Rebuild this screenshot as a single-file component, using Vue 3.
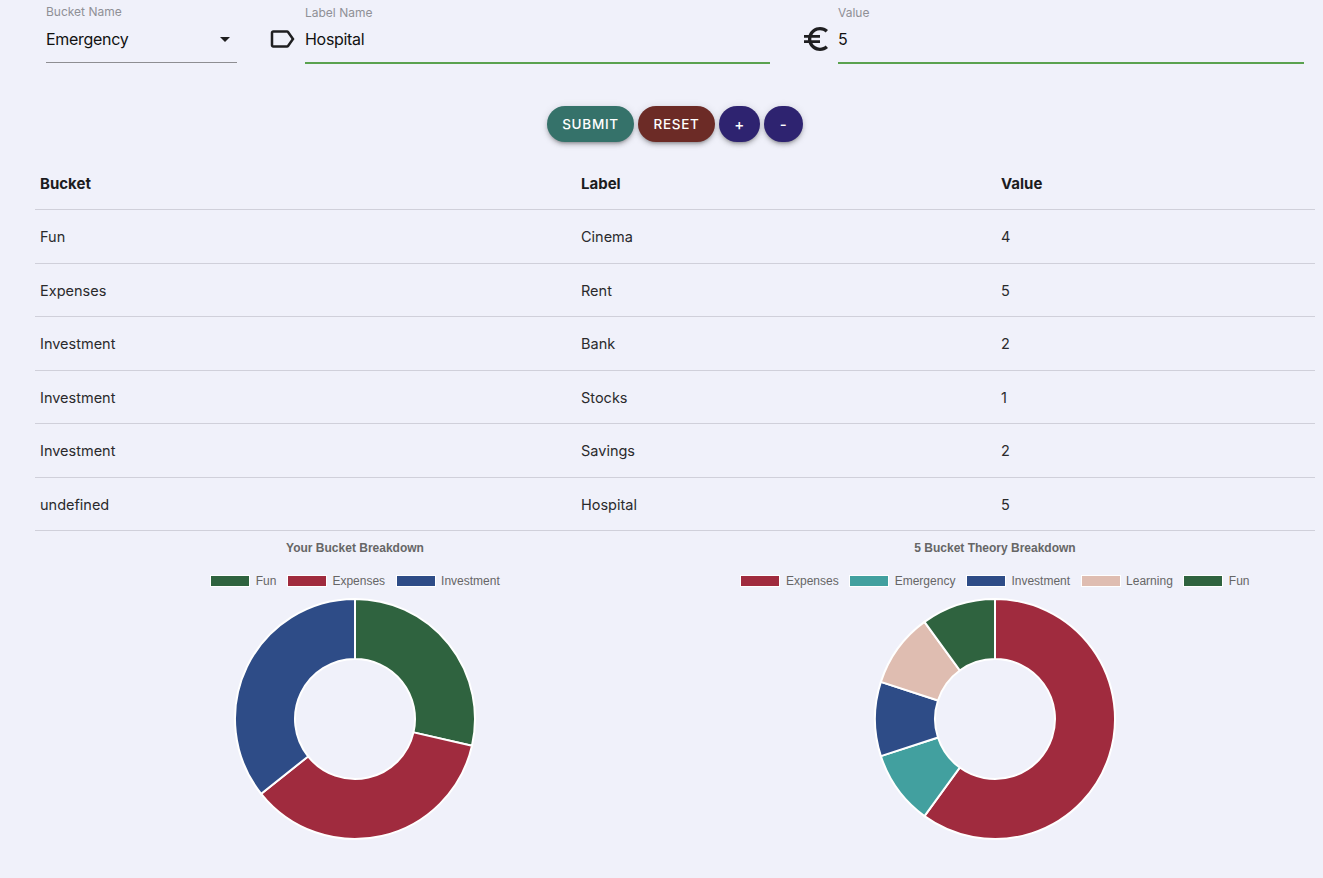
<template>
  <div class="page">
    <!-- form row -->
    <div class="form-row">
      <div class="field select-field">
        <label class="field-label">Bucket Name</label>
        <div class="select-value">
          <span>Emergency</span>
          <svg width="24" height="24" viewBox="0 0 24 24"><path d="M7 10l5 5 5-5z" fill="#1f1f1f" /></svg>
        </div>
      </div>
      <svg class="adorn label-icon" width="30" height="30" viewBox="0 0 24 24">
        <path d="M17.63 5.84C17.27 5.33 16.67 5 16 5L5 5.01C3.9 5.01 3 5.9 3 7v10c0 1.1.9 1.99 2 1.99L16 19c.67 0 1.27-.33 1.63-.84L22 12l-4.37-6.16zM16 17H5V7h11l3.55 5L16 17z" />
      </svg>
      <div class="field input-field label-field">
        <label class="field-label">Label Name</label>
        <div class="input-value">Hospital</div>
      </div>
      <svg class="adorn euro-icon" width="32" height="32" viewBox="0 0 24 24">
        <path d="M15 18.5c-2.51 0-4.68-1.42-5.76-3.5H15v-2H8.58c-.05-.33-.08-.66-.08-1s.03-.67.08-1H15V9H9.24C10.32 6.92 12.5 5.5 15 5.5c1.61 0 3.09.59 4.23 1.57L21 5.3C19.41 3.87 17.3 3 15 3c-3.92 0-7.24 2.51-8.48 6H3v2h3.06c-.04.33-.06.66-.06 1s.02.67.06 1H3v2h3.52c1.24 3.49 4.56 6 8.48 6 2.31 0 4.41-.87 6-2.3l-1.78-1.77c-1.13.98-2.6 1.57-4.22 1.57z" />
      </svg>
      <div class="field input-field">
        <label class="field-label">Value</label>
        <div class="input-value">5</div>
      </div>
    </div>

    <!-- buttons -->
    <div class="actions">
      <button class="btn submit">Submit</button>
      <button class="btn reset">Reset</button>
      <button class="btn small plus">+</button>
      <button class="btn small minus">-</button>
    </div>

    <!-- table -->
    <div class="table">
      <div class="row head">
        <div>Bucket</div>
        <div>Label</div>
        <div>Value</div>
      </div>
      <div v-for="(r, i) in rows" :key="i" class="row">
        <div>{{ r[0] }}</div>
        <div>{{ r[1] }}</div>
        <div>{{ r[2] }}</div>
      </div>
    </div>

    <!-- charts -->
    <div class="charts">
      <div v-for="c in charts" :key="c.title" class="chart">
        <div class="chart-title">{{ c.title }}</div>
        <div class="legend">
          <div v-for="s in c.slices" :key="s.name" class="legend-item">
            <span class="swatch" :style="{ background: s.color }"></span>
            <span>{{ s.name }}</span>
          </div>
        </div>
        <svg width="244" height="244" viewBox="-122 -122 244 244">
          <path v-for="s in c.slices" :key="s.name" :d="s.d" :fill="s.color" stroke="#fff" stroke-width="2" />
        </svg>
      </div>
    </div>
  </div>
</template>

<script setup>
const green = '#2f633f'
const red = '#a02b3e'
const blue = '#2e4c87'
const teal = '#42a09f'
const tan = '#dfbdb1'

const rows = [
  ['Fun', 'Cinema', 4],
  ['Expenses', 'Rent', 5],
  ['Investment', 'Bank', 2],
  ['Investment', 'Stocks', 1],
  ['Investment', 'Savings', 2],
  ['undefined', 'Hospital', 5],
]

// builds donut segments clockwise from 12 o'clock
function donut(items, outer = 120, inner = 60) {
  const total = items.reduce((sum, it) => sum + it.value, 0)
  let angle = -Math.PI / 2
  return items.map((it) => {
    const next = angle + (it.value / total) * Math.PI * 2
    const pt = (r, a) => `${(r * Math.cos(a)).toFixed(2)} ${(r * Math.sin(a)).toFixed(2)}`
    const large = next - angle > Math.PI ? 1 : 0
    const d = `M${pt(outer, angle)} A${outer} ${outer} 0 ${large} 1 ${pt(outer, next)} L${pt(inner, next)} A${inner} ${inner} 0 ${large} 0 ${pt(inner, angle)} Z`
    angle = next
    return { ...it, d }
  })
}

const charts = [
  {
    title: 'Your Bucket Breakdown',
    slices: donut([
      { name: 'Fun', value: 4, color: green },
      { name: 'Expenses', value: 5, color: red },
      { name: 'Investment', value: 5, color: blue },
    ]),
  },
  {
    title: '5 Bucket Theory Breakdown',
    slices: donut([
      { name: 'Expenses', value: 60, color: red },
      { name: 'Emergency', value: 10, color: teal },
      { name: 'Investment', value: 10, color: blue },
      { name: 'Learning', value: 10, color: tan },
      { name: 'Fun', value: 10, color: green },
    ]),
  },
]
</script>

<style>
html, body {
  margin: 0;
  background: #f0f1fa;
}
</style>

<style scoped>
.page {
  height: 878px;
  overflow: hidden;
  background: #f0f1fa;
  font-family: Inter, "Liberation Sans", sans-serif;
  color: #1c1c1e;
}

.form-row {
  display: flex;
  align-items: flex-start;
  padding: 0 19px 0 46px;
}

.field-label {
  display: block;
  font-size: 12px;
  line-height: 14px;
  color: #8f9096;
}

.select-field {
  width: 191px;
  margin-top: 5px;
  margin-right: 30px;
  height: 57px;
  border-bottom: 1px solid #8e8e92;
}

.select-value {
  display: flex;
  justify-content: space-between;
  align-items: center;
  font-size: 16px;
  line-height: 24px;
  letter-spacing: -0.3px;
  margin-top: 8px;
  color: #111;
}

.adorn {
  flex: none;
  fill: #1f1f21;
}

.label-icon {
  margin-top: 24px;
  margin-right: 8px;
}

.euro-icon {
  margin-top: 23px;
  margin-left: 30px;
  margin-right: 6px;
}

.input-field {
  flex: 1;
  margin-top: 6px;
  height: 56px;
  border-bottom: 2px solid #5aa24f;
}

.label-field {
  flex: 0 0 465px;
}

.input-value {
  font-size: 16px;
  line-height: 24px;
  letter-spacing: -0.3px;
  margin-top: 7px;
  color: #111;
}

.actions {
  display: flex;
  justify-content: center;
  gap: 4px;
  margin-top: 42px;
  padding-left: 27px;
}

.btn {
  height: 36px;
  border: none;
  border-radius: 18px;
  padding: 0;
  font-family: inherit;
  font-size: 13.5px;
  font-weight: 500;
  letter-spacing: 0.7px;
  text-transform: uppercase;
  color: #fff;
  box-shadow: 0 3px 3px -2px rgba(0, 0, 0, 0.25), 0 3px 4px rgba(0, 0, 0, 0.16), 0 1px 8px rgba(0, 0, 0, 0.12);
}

.submit { background: #35726a; width: 87px; }
.reset { background: #6c2b26; width: 77px; }
.small { background: #2e2370; font-size: 15px; }
.plus { width: 41px; }
.minus { width: 39px; }

.table {
  margin: 15px 8px 0 35px;
}

.row {
  display: grid;
  grid-template-columns: 541px 420px 1fr;
  align-items: center;
  height: 53.5px;
  box-sizing: border-box;
  padding: 1px 0 0 5px;
  border-bottom: 1px solid #d0d0da;
  font-size: 14.5px;
  color: #2a2a2c;
}

.head {
  height: 53px;
  padding-top: 0;
  font-size: 15px;
  font-weight: 700;
  color: #1c1c1e;
}

.charts {
  display: grid;
  grid-template-columns: 640px 640px;
  margin-left: 35px;
}

.chart {
  display: flex;
  flex-direction: column;
  align-items: center;
}

.chart-title {
  margin-top: 10px;
  font-family: "Liberation Sans", Arial, sans-serif;
  font-size: 12px;
  line-height: 14px;
  font-weight: 700;
  color: #666;
}

.legend {
  display: flex;
  gap: 10.5px;
  margin-top: 19px;
  margin-bottom: 9px;
  font-family: "Liberation Sans", Arial, sans-serif;
  font-size: 12px;
  line-height: 14px;
  color: #666;
}

.legend-item {
  display: flex;
  align-items: center;
  gap: 5.5px;
}

.swatch {
  width: 38px;
  height: 10px;
  border: 1.5px solid #fff;
}
</style>
